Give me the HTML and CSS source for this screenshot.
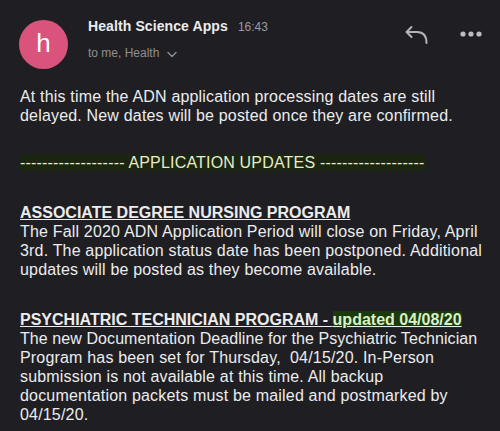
FILE: index.html
```html
<!DOCTYPE html>
<html>
<head>
<meta charset="utf-8">
<link rel="stylesheet" href="styles.css">
</head>
<body>
<div class="mail">
  <header class="head">
    <div class="avatar">h</div>
    <div class="meta">
      <div class="from"><span class="name">Health Science Apps</span><span class="time">16:43</span></div>
      <div class="to">to me, Health <svg class="chev" width="10" height="7" viewBox="0 0 10 7"><path d="M1 1.5 L5 5.5 L9 1.5" fill="none" stroke="#8e8e93" stroke-width="1.4" stroke-linecap="round" stroke-linejoin="round"/></svg></div>
    </div>
    <div class="actions">
      <svg class="reply" width="26" height="20" viewBox="0 0 26 20"><path d="M7.5 2 L2.5 7 L7.5 12 M2.5 7 H13 Q22.5 7 22.5 18" fill="none" stroke="#b4b4b8" stroke-width="2" stroke-linecap="round" stroke-linejoin="round"/></svg>
      <svg class="more" width="24" height="8" viewBox="0 0 24 8"><circle cx="3" cy="4" r="2.6" fill="#bdbdc1"/><circle cx="11" cy="4" r="2.6" fill="#bdbdc1"/><circle cx="19" cy="4" r="2.6" fill="#bdbdc1"/></svg>
    </div>
  </header>
  <main class="body">
    <p class="intro"><span class="ln">At this time the ADN application processing dates are still</span><span class="ln">delayed. New dates will be posted once they are confirmed.</span></p>
    <p class="banner"><span class="hl">------------------- APPLICATION UPDATES -------------------</span></p>
    <section class="prog">
      <h2 class="ptitle">ASSOCIATE DEGREE NURSING PROGRAM</h2>
      <p class="ptext"><span class="ln jl">The Fall 2020 ADN Application Period will close on Friday, April</span><span class="ln jl">3rd. The application status date has been postponed. Additional</span><span class="ln">updates will be posted as they become available.</span></p>
    </section>
    <section class="prog">
      <h2 class="ptitle">PSYCHIATRIC TECHNICIAN PROGRAM - <span class="upd">updated 04/08/20</span></h2>
      <p class="ptext"><span class="ln tight">The new Documentation Deadline for the Psychiatric Technician</span><span class="ln">Program has been set for Thursday, &nbsp;04/15/20. In-Person</span><span class="ln">submission is not available at this time. All backup</span><span class="ln">documentation packets must be mailed and postmarked by</span><span class="ln">04/15/20.</span></p>
    </section>
  </main>
</div>
</body>
</html>
```
FILE: styles.css
```css
html, body {
  margin: 0;
  padding: 0;
  background: #1f1f23;
}
body {
  font-family: "Liberation Sans", Arial, sans-serif;
  color: #ececee;
  width: 500px;
  height: 431px;
  overflow: hidden;
}
.head {
  display: flex;
  align-items: flex-start;
  padding: 16px 16px 0 19px;
}
.avatar {
  width: 49px;
  height: 49px;
  margin-top: 4px;
  border-radius: 50%;
  background: #d9537c;
  color: #ffffff;
  font-size: 26px;
  line-height: 47px;
  text-align: center;
}
.meta {
  margin-left: 20px;
  margin-top: 2px;
  flex: 1;
}
.from {
  display: flex;
  align-items: baseline;
  line-height: 17px;
}
.name {
  font-weight: bold;
  font-size: 14px;
  color: #ececee;
  letter-spacing: 0.1px;
}
.time {
  margin-left: 10px;
  font-size: 12px;
  color: #9b9ba0;
}
.to {
  margin-top: 10px;
  font-size: 12px;
  line-height: 15px;
  color: #8e8e93;
}
.chev {
  margin-left: 4px;
  vertical-align: -1px;
}
.actions {
  display: flex;
  align-items: center;
  margin-top: 9px;
}
.more {
  margin-left: 30px;
  margin-top: -2px;
}
.body {
  padding: 0 24px 0 20px;
  margin-top: 18px;
  font-size: 16px;
  line-height: 19px;
  letter-spacing: 0.18px;
}
.body p {
  margin: 0;
}
.ln {
  display: block;
  white-space: nowrap;
}
.tight {
  letter-spacing: 0.08px;
}
.jl {
  text-align: justify;
  text-align-last: justify;
}
.banner {
  margin-top: 28px !important;
}
.hl {
  background: #1c2511;
  color: #e4eccb;
}
.prog {
  margin-top: 31px;
}
.ptitle {
  margin: 0;
  font-size: 16px;
  line-height: 19px;
  font-weight: bold;
  text-decoration: underline;
  letter-spacing: 0;
  color: #ececee;
}
.upd {
  background: #1b3a0c;
  color: #d9f0c6;
}
```
